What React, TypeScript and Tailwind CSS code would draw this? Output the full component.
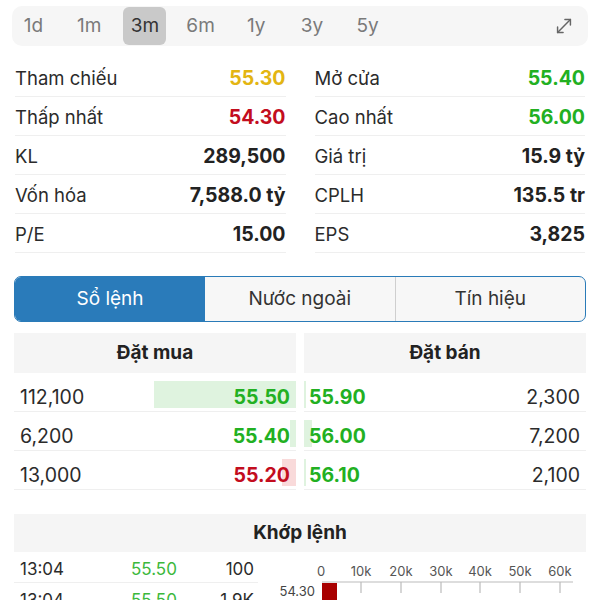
import { MoveDiagonal } from 'lucide-react'

const periods = ['1d', '1m', '3m', '6m', '1y', '3y', '5y']

const stats = [
  [
    { label: 'Tham chiếu', value: '55.30', color: 'text-[#e3b512]' },
    { label: 'Thấp nhất', value: '54.30', color: 'text-[#c30d1e]' },
    { label: 'KL', value: '289,500', color: 'text-[#222]' },
    { label: 'Vốn hóa', value: '7,588.0 tỷ', color: 'text-[#222]' },
    { label: 'P/E', value: '15.00', color: 'text-[#222]' },
  ],
  [
    { label: 'Mở cửa', value: '55.40', color: 'text-[#22b022]' },
    { label: 'Cao nhất', value: '56.00', color: 'text-[#22b022]' },
    { label: 'Giá trị', value: '15.9 tỷ', color: 'text-[#222]' },
    { label: 'CPLH', value: '135.5 tr', color: 'text-[#222]' },
    { label: 'EPS', value: '3,825', color: 'text-[#222]' },
  ],
]

const bids = [
  { qty: '112,100', price: '55.50', up: true, bar: 142 },
  { qty: '6,200', price: '55.40', up: true, bar: 6 },
  { qty: '13,000', price: '55.20', up: false, bar: 14 },
]

const asks = [
  { qty: '2,300', price: '55.90', bar: 2 },
  { qty: '7,200', price: '56.00', bar: 8 },
  { qty: '2,100', price: '56.10', bar: 2 },
]

const ticks = [
  { label: '0', x: 63 },
  { label: '10k', x: 103 },
  { label: '20k', x: 143 },
  { label: '30k', x: 183 },
  { label: '40k', x: 222 },
  { label: '50k', x: 262 },
  { label: '60k', x: 302 },
]

export default function App() {
  return (
    <div className="w-[600px] h-[600px] overflow-hidden bg-white text-[#222]" style={{ fontFamily: 'Inter, "Noto Sans", sans-serif' }}>
      {/* period selector */}
      <div className="mx-[12px] mt-[6px] h-[40px] rounded-[10px] bg-[#f6f6f6] flex items-center">
        <div className="flex gap-[12.7px]">
          {periods.map(p => (
            <div
              key={p}
              className={`w-[43px] h-[38px] rounded-[6px] flex items-center justify-center text-[19px] ${
                p === '3m' ? 'bg-[#c9c9c9] text-[#333]' : 'text-[#7a7a7a]'
              }`}
            >
              {p}
            </div>
          ))}
        </div>
        <MoveDiagonal className="ml-auto mr-[13px] text-[#666]" size={22} strokeWidth={1.6} />
      </div>

      {/* stats */}
      <div className="mt-[12px] px-[15px] grid grid-cols-2 gap-[29px]">
        {stats.map((col, i) => (
          <div key={i}>
            {col.map(s => (
              <div key={s.label} className="h-[39px] flex items-center justify-between pt-[4px] border-b border-[#efefef]">
                <span className="text-[18.5px] text-[#2b2b2b]">{s.label}</span>
                <span className={`text-[19.5px] font-bold ${s.color}`}>{s.value}</span>
              </div>
            ))}
          </div>
        ))}
      </div>

      {/* tabs */}
      <div className="mx-[14px] mt-[23px] h-[46px] rounded-[7px] border-[1.5px] border-[#2a7bb8] flex overflow-hidden bg-[#f7f7f7]">
        <div className="w-[190px] bg-[#2a7bba] text-white flex items-center justify-center text-[19px]">Sổ lệnh</div>
        <div className="flex-1 flex items-center justify-center text-[19px] text-[#333] border-r border-[#cfcfcf]">Nước ngoài</div>
        <div className="flex-1 flex items-center justify-center text-[19px] text-[#333]">Tín hiệu</div>
      </div>

      {/* order book */}
      <div className="mx-[14px] mt-[11px] grid grid-cols-2 gap-[8px]">
        <div>
          <div className="h-[40px] bg-[#f5f5f5] flex items-center justify-center text-[19px] font-bold">Đặt mua</div>
          {bids.map(b => (
            <div key={b.price} className="relative h-[39px] flex items-center justify-between px-[6px] pt-[11px] border-b border-[#efefef]">
              <div
                className={`absolute right-0 top-[8px] bottom-[3px] ${b.up ? 'bg-[#dff3df]' : 'bg-[#f9dada]'}`}
                style={{ width: b.bar }}
              />
              <span className="relative text-[19.5px] text-[#2b2b2b]">{b.qty}</span>
              <span className={`relative text-[19.5px] font-bold ${b.up ? 'text-[#22b022]' : 'text-[#c30d1e]'}`}>{b.price}</span>
            </div>
          ))}
        </div>
        <div>
          <div className="h-[40px] bg-[#f5f5f5] flex items-center justify-center text-[19px] font-bold">Đặt bán</div>
          {asks.map(a => (
            <div key={a.price} className="relative h-[39px] flex items-center justify-between pl-[5px] pr-[6px] pt-[11px] border-b border-[#efefef]">
              <div className="absolute left-0 top-[8px] bottom-[3px] bg-[#dff3df]" style={{ width: a.bar }} />
              <span className="relative text-[19.5px] font-bold text-[#22b022]">{a.price}</span>
              <span className="relative text-[19.5px] text-[#2b2b2b]">{a.qty}</span>
            </div>
          ))}
        </div>
      </div>

      {/* matched orders */}
      <div className="mx-[14px] mt-[24px] h-[38px] bg-[#f5f5f5] flex items-center justify-center text-[19px] font-bold">
        Khớp lệnh
      </div>
      <div className="mx-[14px] flex">
        <div className="w-[244px]">
          {['100', '1.9K'].map(v => (
            <div key={v} className="h-[31px] flex items-center pt-[5px] border-b border-[#efefef] text-[17px]">
              <span className="w-[117px] pl-[6px] text-[#2b2b2b]">13:04</span>
              <span className="w-[50px] text-[#3cb83c]">55.50</span>
              <span className="flex-1 text-right pr-[4px] text-[#2b2b2b]">{v}</span>
            </div>
          ))}
        </div>
        <div className="relative flex-1 h-[50px]">
          {ticks.map(t => (
            <span
              key={t.label}
              className="absolute top-[10px] -translate-x-1/2 text-[13px] text-[#555]"
              style={{ left: t.x }}
            >
              {t.label}
            </span>
          ))}
          <svg className="absolute left-0 top-0" width="328" height="50">
            <line x1="64" y1="30" x2="315" y2="30" stroke="#bbb" strokeWidth="1.2" />
            {ticks.slice(1).map(t => (
              <line key={t.label} x1={t.x} y1="30" x2={t.x} y2="41" stroke="#bbb" strokeWidth="1.2" />
            ))}
            <rect x="64" y="31" width="15" height="19" fill="#a80000" />
          </svg>
          <span className="absolute top-[30px] right-[271px] text-[13px] text-[#444]">54.30</span>
        </div>
      </div>
    </div>
  )
}
